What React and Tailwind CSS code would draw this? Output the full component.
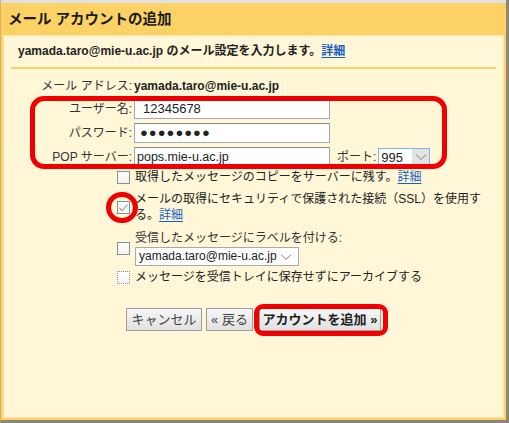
import React from "react";

const font = { fontFamily: '"Liberation Sans", "Noto Sans CJK JP", sans-serif' };

function Chevron({ className = "" }) {
  return (
    <svg width="12" height="8" viewBox="0 0 12 8" className={"shrink-0 " + className}>
      <polyline points="1,1.5 6,6.5 11,1.5" fill="none" stroke="#7a7a7a" strokeWidth="1" />
    </svg>
  );
}

function Check({ checked = false, dashed = false }) {
  return (
    <div
      className={
        "w-[13px] h-[13px] shrink-0 flex items-center justify-center bg-gradient-to-b from-[#ffffff] to-[#f2f2f2] " +
        (dashed ? "border border-dotted border-[#8f8f8f]" : "border border-[#8e8e8e]")
      }
    >
      {checked && (
        <svg width="11" height="11" viewBox="0 0 11 11">
          <polyline points="1.5,6 4.2,8.5 9.5,2.5" fill="none" stroke="#9a9a9a" strokeWidth="1.1" />
        </svg>
      )}
    </div>
  );
}

function Link({ children }) {
  return <span className="text-[#1a5fc8] underline underline-offset-2">{children}</span>;
}

export default function App() {
  return (
    <div
      className="w-[509px] h-[423px] flex flex-col bg-[#fcd266] border-l border-l-[#d8b25c] border-r-[3px] border-r-[#8b8677] border-b-[3px] border-b-[#8b8677] overflow-hidden text-[#222]"
      style={font}
    >
      <div className="h-[3px] bg-[#e2e2e2] shrink-0" />
      <div className="h-[32px] shrink-0 flex items-center pl-[7px] text-[14.5px] font-bold leading-none text-[#1a1a1a]">
        メール アカウントの追加
      </div>
      <div className="flex-1 mx-[2px] mb-[2px] bg-[#fff7d7] border border-[#fde7a4] relative">
        <div className="pt-[7px] pl-[14px] text-[12px] leading-[16px] font-bold">
          yamada.taro@mie-u.ac.jp のメール設定を入力します。<Link>詳細</Link>
        </div>
        <div className="mx-[7px] mt-[8px] h-[2px] bg-[#fcd266]" />

        <div className="mt-[9px] grid grid-cols-[128px_auto] gap-x-[2px] items-center text-[12px]">
          <div className="text-right leading-[16px] text-[#333]">メール アドレス:</div>
          <div className="leading-[16px] font-bold">yamada.taro@mie-u.ac.jp</div>

          <div className="text-right leading-[16px] text-[#333] mt-[5px]">ユーザー名:</div>
          <div className="mt-[5px] w-[196px] h-[20px] bg-white border border-[#a9a9a9] border-t-[#8a8a8a] pl-[8px] text-[13px] leading-[18px]">
            12345678
          </div>

          <div className="text-right leading-[16px] text-[#333] mt-[4px]">パスワード:</div>
          <div className="mt-[4px] w-[196px] h-[20px] bg-white border border-[#a9a9a9] border-t-[#8a8a8a] pl-[5px] text-[13px] leading-[18px] tracking-[1px]">
            ●●●●●●●●
          </div>

          <div className="text-right leading-[16px] text-[#333] mt-[4px]">POP サーバー:</div>
          <div className="mt-[4px] flex items-center">
            <div className="w-[196px] h-[20px] bg-white border border-[#a9a9a9] border-t-[#8a8a8a] pl-[2px] text-[12.5px] leading-[18px]">
              pops.mie-u.ac.jp
            </div>
            <span className="ml-[7px] text-[#333] leading-[16px]">ポート:</span>
            <div className="ml-[2px] w-[52px] h-[19px] bg-white border border-[#7eb4ea] flex items-stretch text-[13px]">
              <span className="flex-1 pl-[2px] leading-[17px]">995</span>
              <span className="w-[17px] bg-[#e3e3e3] flex items-center justify-center">
                <Chevron />
              </span>
            </div>
          </div>
        </div>

        <div className="pl-[113px] text-[12px] leading-[16px]">
          <div className="mt-[2px] flex items-center gap-[5px]">
            <Check />
            <span>
              取得したメッセージのコピーをサーバーに残す。<Link>詳細</Link>
            </span>
          </div>
          <div className="mt-[6px] flex items-center gap-[5px]">
            <Check checked />
            <span>
              メールの取得にセキュリティで保護された接続（SSL）を使用す
              <br />
              る。<Link>詳細</Link>
            </span>
          </div>
          <div className="mt-[7px] flex items-center gap-[5px]">
            <Check />
            <div className="flex flex-col">
              <span className="text-[#333]">受信したメッセージにラベルを付ける:</span>
              <div className="mt-[1px] w-[164px] h-[19px] bg-white border border-[#a9a9a9] flex items-center justify-between pl-[3px] pr-[6px] text-[12px] whitespace-nowrap">
                <span className="leading-[17px]">yamada.taro@mie-u.ac.jp</span>
                <Chevron />
              </div>
            </div>
          </div>
          <div className="mt-[3px] flex items-center gap-[5px]">
            <Check dashed />
            <span>メッセージを受信トレイに保存せずにアーカイブする</span>
          </div>
        </div>

        <div className="mt-[23px] ml-[122px] flex items-center text-[13px]">
          <button className="h-[23px] w-[76px] border border-[#9e9e9e] bg-gradient-to-b from-[#f7f7f7] to-[#e1e1e1] text-[#444] leading-none">
            キャンセル
          </button>
          <button className="ml-[4px] h-[23px] w-[47px] border border-[#9e9e9e] bg-gradient-to-b from-[#f7f7f7] to-[#e1e1e1] text-[#444] leading-none">
            « 戻る
          </button>
          <button className="ml-[6px] h-[23px] w-[122px] border border-[#9e9e9e] bg-gradient-to-b from-[#f7f7f7] to-[#e1e1e1] text-[#222] font-bold leading-none">
            アカウントを追加 »
          </button>
        </div>

        {/* annotation overlays */}
        <div className="absolute left-[26px] top-[60px] w-[417px] h-[73px] border-[5px] border-[#f00000] rounded-[14px] pointer-events-none" />
        <div className="absolute left-[102px] top-[156px] w-[32px] h-[31px] border-[5px] border-[#f00000] rounded-full pointer-events-none" />
        <div className="absolute left-[250px] top-[268px] w-[134px] h-[32px] border-[5px] border-[#f00000] rounded-[9px] pointer-events-none" />
      </div>
    </div>
  );
}
